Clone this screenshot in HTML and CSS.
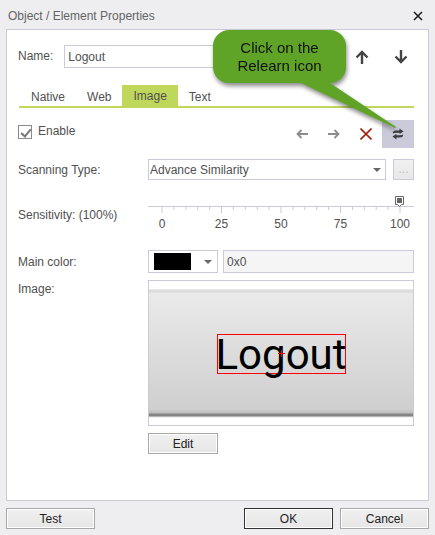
FILE: index.html
```
<!DOCTYPE html>
<html lang="en">
<head>
    <meta charset="UTF-8">
    <meta name="viewport" content="width=device-width, initial-scale=1.0">
    <title>Object / Element Properties</title>
    <link rel="stylesheet" href="styles.css">
</head>
<body>
    <form class="dialog">
        <header class="titlebar">
            <h1>Object / Element Properties</h1>
            <button type="button" class="close" aria-label="Close">
                <svg width="10" height="10" viewBox="0 0 10 10"><path d="M1 1l8 8M9 1l-8 8" stroke="#1e1e1e" stroke-width="1.6"/></svg>
            </button>
        </header>

        <main class="panel">
            <div class="name-row">
                <label for="name">Name:</label>
                <input type="text" id="name" class="field" value="Logout">
                <button type="button" class="icon-btn move" aria-label="Previous">
                    <svg width="14" height="14" viewBox="0 0 14 14"><path d="M7 14V2M1.500 7.500L7 2l5.500 5.500" fill="none" stroke="#444" stroke-width="2.4"/></svg>
                </button>
                <button type="button" class="icon-btn move" aria-label="Next">
                    <svg width="14" height="14" viewBox="0 0 14 14"><path d="M7 0v12M1.500 6.500L7 12l5.500-5.500" fill="none" stroke="#444" stroke-width="2.4"/></svg>
                </button>
            </div>

            <nav class="tabs">
                <a href="#native">Native</a>
                <a href="#web">Web</a>
                <a href="#image" class="active">Image</a>
                <a href="#text">Text</a>
            </nav>

            <div class="tools-row">
                <label class="check"><input type="checkbox" checked> Enable</label>
                <button type="button" class="icon-btn" aria-label="Back">
                    <svg width="12" height="10" viewBox="0 0 12 10"><path d="M12 5H2M5.5 1L1.5 5l4 4" fill="none" stroke="#8c8c8c" stroke-width="1.8"/></svg>
                </button>
                <button type="button" class="icon-btn" aria-label="Forward">
                    <svg width="12" height="10" viewBox="0 0 12 10"><path d="M0 5h10M6.5 1l4 4-4 4" fill="none" stroke="#8c8c8c" stroke-width="1.8"/></svg>
                </button>
                <button type="button" class="icon-btn" aria-label="Delete">
                    <svg width="12" height="12" viewBox="0 0 12 12"><path d="M.5.5l11 11M11.5.5l-11 11" stroke="#a3200d" stroke-width="1.6"/></svg>
                </button>
                <button type="button" class="icon-btn relearn" aria-label="Relearn">
                    <svg width="12" height="12" viewBox="0 0 12 12"><path d="M.8 5.400Q.8 2.400 4 2.400h3.500V.6L11.600 3.600 7.500 6V4.700H4Q2 4.700.8 5.400zM11.200 6.600Q11.200 9.600 8 9.600H4.500v1.800L.4 8.400 4.500 6v1.300H8q2 0 3.200-.7z" fill="#3c3c3c"/></svg>
                </button>
                <div class="callout">
                    <svg width="100" height="50" viewBox="0 0 100 50"><path d="M0 0h30L99 46 98 47z" fill="#5fa427"/></svg>
                    <p>Click on the<br>Relearn icon</p>
                </div>
            </div>

            <div class="row scanning">
                <label for="scanning">Scanning Type:</label>
                <div class="group">
                    <select id="scanning" class="field">
                        <option>Advance Similarity</option>
                    </select>
                    <button type="button" class="more" disabled>...</button>
                </div>
            </div>

            <div class="row sensitivity">
                <label for="sensitivity">Sensitivity: (100%)</label>
                <div class="slider">
                    <input type="range" id="sensitivity" min="0" max="100" value="100">
                    <svg class="scale" width="100%" height="24" aria-hidden="true"></svg>
                </div>
            </div>

            <div class="row color">
                <label for="color">Main color:</label>
                <div class="group">
                    <button type="button" class="field swatch" aria-label="Pick color"><span></span></button>
                    <input type="text" id="color" class="field" value="0x0" readonly>
                </div>
            </div>

            <div class="row image">
                <span class="caption">Image:</span>
                <div>
                    <div class="preview">
                        <div class="sample">
                            <span class="match">Logout
                                <svg width="7" height="7" viewBox="0 0 7 7"><path d="M3.500 0v7M0 3.500h7" stroke="#f00"/></svg>
                            </span>
                        </div>
                    </div>
                    <button type="button" class="btn edit">Edit</button>
                </div>
            </div>
        </main>

        <footer class="actions">
            <button type="button" class="btn test">Test</button>
            <button type="submit" class="btn default">OK</button>
            <button type="button" class="btn">Cancel</button>
        </footer>
    </form>

    <script src="script.js"></script>
</body>
</html>
```
FILE: styles.css
```
:root {
    --border: #cbcada;
    --text: #505050;
    --green: #bfd85c;
}

* {
    box-sizing: border-box;
}

body {
    margin: 0;
    background-color: #eeeef1;
    font-family: "Liberation Sans", Arial, sans-serif;
    font-size: 12px;
    line-height: 15px;
    color: var(--text);
}

button, input, select {
    font: inherit;
    color: inherit;
    margin: 0;
    padding: 0;
}

svg {
    display: block;
}

.dialog {
    display: flex;
    flex-direction: column;
    min-height: 100vh;
    padding: 0 6px 6px;
}

.titlebar {
    display: flex;
    align-items: center;
    justify-content: space-between;
    height: 29px;
    padding: 3px 6px 0 2px;
}

.titlebar h1 {
    margin: 0;
    font-size: 12px;
    font-weight: normal;
    color: #646464;
}

.close, .icon-btn {
    display: flex;
    align-items: center;
    justify-content: center;
    border: none;
    background: none;
}

.panel {
    flex: 1;
    padding: 15px 14px 15px 11px;
    border: 1px solid var(--border);
    background-color: #fff;
}

.field {
    height: 23px;
    padding: 0 3px;
    border: 1px solid var(--border);
    border-radius: 0;
    background-color: #fff;
}

/* name + previous / next */
.name-row {
    display: flex;
    align-items: center;
    margin-right: -6px;
}

.name-row .field {
    flex: 1;
    min-width: 0;
    margin: 0 8px 0 11px;
}

.move {
    width: 39px;
    height: 23px;
}

.tabs {
    display: flex;
    margin: 17px 0 12px 1px;
    padding-left: 1px;
    border-bottom: 2px solid var(--green);
}

.tabs a {
    height: 21px;
    padding: 5px 11px 0;
    color: inherit;
    text-decoration: none;
}

.tabs .active {
    padding-top: 4px;
    background-color: var(--green);
}

/* enable + toolbar */
.tools-row {
    position: relative;
    display: flex;
    height: 28px;
}

.check {
    display: flex;
    gap: 6px;
    height: 23px;
    align-items: center;
    margin-right: auto;
}

.check input {
    appearance: none;
    width: 14px;
    height: 14px;
    border: 1px solid #8a8a8a;
    background-color: #fff;
}

.check input:checked::before {
    content: "";
    display: block;
    width: 4px;
    height: 8px;
    margin: 1px 4px;
    border: solid #777;
    border-width: 0 2px 2px 0;
    transform: rotate(40deg);
}

.icon-btn {
    flex-shrink: 0;
}

.tools-row .icon-btn {
    width: 32px;
}

.tools-row .relearn {
    background-color: var(--border);
}

.callout {
    position: absolute;
    right: 68px;
    bottom: 65px;
    width: 133px;
    filter: drop-shadow(1px 3px 2px rgba(0, 0, 0, 0.45));
    color: #111;
    font-size: 15px;
    line-height: 18px;
    text-align: center;
}

.callout p {
    margin: 0;
    padding: 9px 0 8px;
    border-radius: 16px;
    background-color: #5fa427;
}

.callout svg {
    position: absolute;
    left: 84px;
    top: 51px;
}

/* labelled rows */
.row {
    display: grid;
    grid-template-columns: 130px 1fr;
}

.row label, .caption {
    padding-top: 2px;
}

.group {
    display: flex;
}

.scanning {
    margin-top: 11px;
    align-items: center;
}

.scanning .field {
    flex: 1;
    height: 21px;
    padding: 1px 1px 0;
    appearance: none;
    background: #fff url("data:image/svg+xml,%3Csvg xmlns='http://www.w3.org/2000/svg' width='8' height='4'%3E%3Cpath d='M0 0h8L4 4z' fill='%23666'/%3E%3C/svg%3E") no-repeat right 4px center;
}

.more {
    width: 21px;
    margin-left: 7px;
    border: 1px solid var(--border);
    background: linear-gradient(#f0f0f0, #e8e8e8);
    color: #bbb;
}

.sensitivity {
    margin-top: 16px;
}

.sensitivity label {
    margin-top: 10px;
}

.slider input {
    display: block;
    appearance: none;
    width: 100%;
    height: 11px;
    padding: 0 10px;
    border-bottom: 1px solid var(--border);
    background: none;
}

.slider input::-webkit-slider-thumb {
    appearance: none;
    width: 9px;
    height: 11px;
    background: url("data:image/svg+xml,%3Csvg xmlns='http://www.w3.org/2000/svg' width='9' height='11'%3E%3Cpath d='M.5.5h8v8h-2L4.500 10.500 2.500 8.500h-2z' fill='%23fff' stroke='%23666'/%3E%3Cpath d='M2 2h5v5H2z' fill='%23666'/%3E%3C/svg%3E");
}

.scale {
    width: calc(100% - 28px);
    margin-left: 14px;
    overflow: visible;
    fill: var(--text);
}

.scale line {
    stroke: var(--border);
}

.color {
    margin-top: 19px;
    align-items: center;
}

.color input {
    flex: 1;
    min-width: 0;
    margin-left: 5px;
    background-color: #f5f5f5;
}

.swatch {
    width: 70px;
    padding-left: 5px;
    background: #fff url("data:image/svg+xml,%3Csvg xmlns='http://www.w3.org/2000/svg' width='8' height='4'%3E%3Cpath d='M0 0h8L4 4z' fill='%23666'/%3E%3C/svg%3E") no-repeat right 5px center;
}

.swatch span {
    display: block;
    width: 37px;
    height: 17px;
    background-color: #000;
}

.image {
    margin-top: 7px;
}

.preview {
    padding: 8px 0 7px;
    border: 1px solid var(--border);
}

.sample {
    display: flex;
    align-items: center;
    justify-content: center;
    height: 129px;
    background: linear-gradient(#ececec, #dadada 2px, #dadada 3px, #eaeaea 4px, #cfcfcf 120px, #bebebe 124px, #858585 125px, #858585 127px, #e4e4e4 128px, #fff);
}

.match {
    position: relative;
    display: flex;
    justify-content: center;
    width: 129px;
    height: 40px;
    border: 1px solid #f00;
    color: #000;
    font-family: Roboto, sans-serif;
    font-size: 42px;
    line-height: 40px;
}

.match svg {
    position: absolute;
    left: 60px;
    top: 15px;
}

.btn {
    width: 89px;
    height: 21px;
    padding-top: 1px;
    border: 1px solid #a8a8a8;
    background: linear-gradient(#f0f0f0, #e6e6e6);
    box-shadow: inset 0 0 0 1px #fff;
    color: #222;
}

.edit {
    width: 70px;
    margin-top: 7px;
}

.actions {
    display: flex;
    gap: 7px;
    margin-top: 7px;
}

.test {
    margin-right: auto;
}

.default {
    border-color: #333;
}
```
FILE: script.js
```
// Ruler under the slider: a tick every 5, a number every 25
const scale = document.querySelector('.scale');
let marks = '';

for (let value = 0; value <= 100; value += 5) {
    const major = value % 25 === 0;
    marks += `<line x1="${value}%" x2="${value}%" y1="0" y2="${major ? 6 : 3}"/>`;
    if (major) {
        marks += `<text x="${value}%" y="21" text-anchor="middle">${value}</text>`;
    }
}

scale.innerHTML = marks;
```
